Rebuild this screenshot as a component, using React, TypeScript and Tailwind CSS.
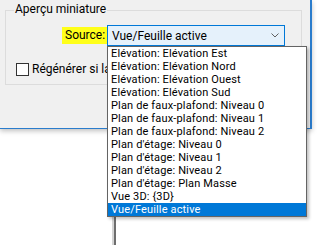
const items = [
  'Elévation: Elévation Est',
  'Elévation: Elévation Nord',
  'Elévation: Elévation Ouest',
  'Elévation: Elévation Sud',
  'Plan de faux-plafond: Niveau 0',
  'Plan de faux-plafond: Niveau 1',
  'Plan de faux-plafond: Niveau 2',
  "Plan d'étage: Niveau 0",
  "Plan d'étage: Niveau 1",
  "Plan d'étage: Niveau 2",
  "Plan d'étage: Plan Masse",
  'Vue 3D: {3D}',
  'Vue/Feuille active',
]

const selected = 'Vue/Feuille active'

export default function App() {
  return (
    <div className="relative w-[317px] h-[245px] overflow-hidden bg-white text-[12px] leading-[16px] text-black font-['Roboto',sans-serif]">
      {/* dialog */}
      <div className="w-[312px] h-[129px] bg-[#f0f0f0] border-r-2 border-b border-[#2a7ccc] shadow-[0_2px_5px_rgba(0,0,0,0.25)] pt-[10px] pl-[5px]">
        <div className="relative w-[297px] h-[75px] border border-[#dcdcdc]">
          <span className="absolute left-[8px] top-[-10px] px-[1px] bg-[#f0f0f0]">Aperçu miniature</span>

          <div className="flex items-center mt-[14px] ml-[56px]">
            <span className="h-[17px] w-[45px] bg-[#ffff1a] pl-[3px] leading-[17px]">Source:</span>
            <div className="flex items-center justify-between w-[178px] h-[21px] bg-[#e5f1fb] border border-[#0078d7] pl-[4px] pr-[5px]">
              <span>Vue/Feuille active</span>
              <svg width="8" height="5" viewBox="0 0 8 5">
                <polyline points="0.5,0.5 4,4 7.5,0.5" fill="none" stroke="#606060" strokeWidth="1" />
              </svg>
            </div>
          </div>

          {/* the rest of this label is hidden under the open list */}
          <label className="flex items-center gap-[3px] mt-[15px] ml-[10px] whitespace-nowrap">
            <span className="shrink-0 w-[13px] h-[13px] border border-[#333333] bg-white" />
            <span>Régénérer si la</span>
          </label>
        </div>
      </div>

      {/* window behind, left edge */}
      <div className="flex ml-[112px] h-[120px]">
        <div className="w-[2px] bg-[#d4d4d4]" />
        <div className="w-[2px] bg-[#6e6e6e]" />
      </div>

      {/* open list */}
      <ul className="absolute left-[107px] top-[46px] w-[200px] bg-white border border-[#646464] shadow-[2px_2px_3px_rgba(0,0,0,0.25)] text-[11px] tracking-[0.15px]">
        {items.map((item) => (
          <li
            key={item}
            className={`h-[13px] leading-[13px] pl-[3px] whitespace-nowrap ${item === selected ? 'bg-[#0078d7] text-white' : ''}`}
          >
            {item}
          </li>
        ))}
      </ul>
    </div>
  )
}
